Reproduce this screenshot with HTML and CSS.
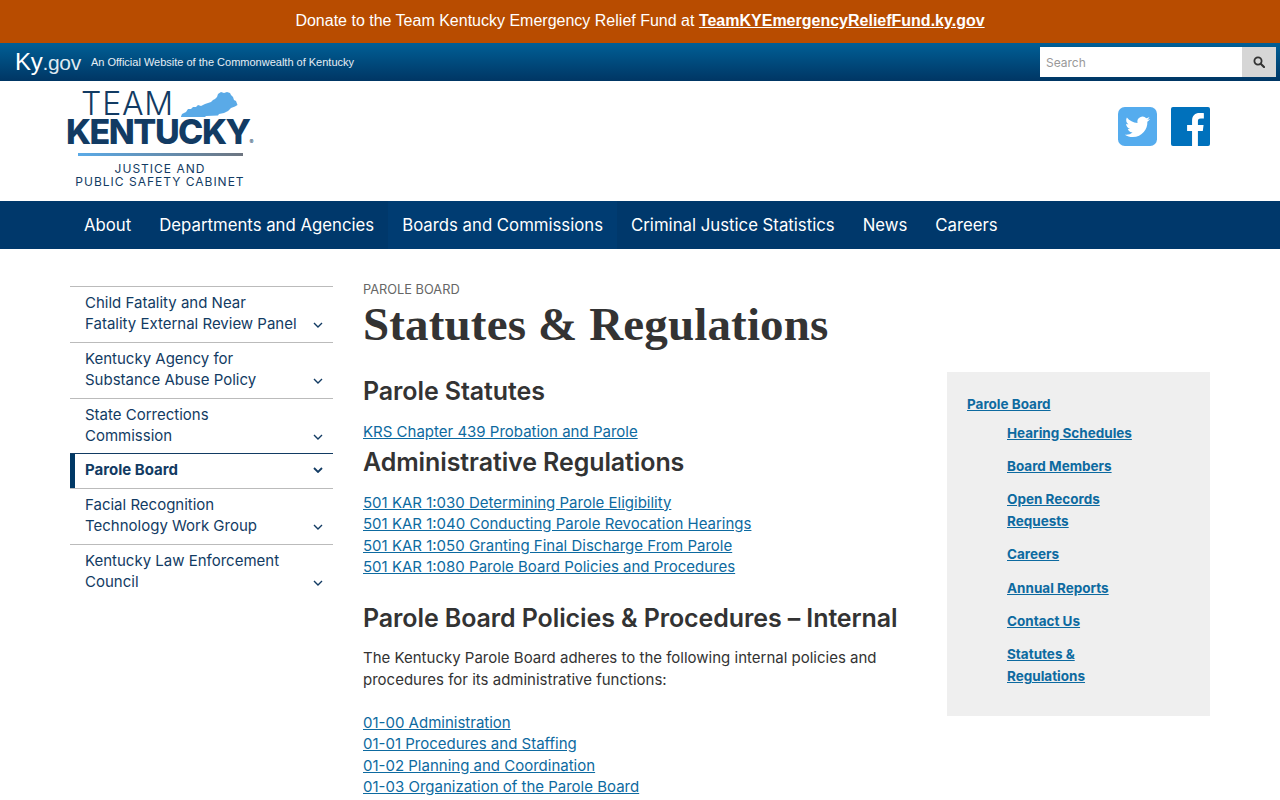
FILE: index.html
```html
<!DOCTYPE html>
<html lang="en">
<head>
    <meta charset="UTF-8">
    <title>Statutes &amp; Regulations</title>
    <link rel="stylesheet" href="styles.css">
</head>
<body>
    <div class="alert">Donate to the Team Kentucky Emergency Relief Fund at <a href="#">TeamKYEmergencyReliefFund.ky.gov</a></div>

    <div class="gov-bar">
        <a class="gov-logo" href="#">Ky<span>.gov</span></a>
        <span class="gov-note">An Official Website of the Commonwealth of Kentucky</span>
        <form class="search">
            <input type="text" placeholder="Search">
            <button type="button" aria-label="Search">
                <svg width="12" height="12" viewBox="0 0 12 12"><circle cx="5" cy="5" r="3.6" fill="none" stroke="#333" stroke-width="1.8"/><path d="M7.7 7.7 11 11" stroke="#333" stroke-width="2.1" stroke-linecap="round"/></svg>
            </button>
        </form>
    </div>

    <header class="site-header">
        <a class="logo" href="#">
            <div class="logo-top">
                <span class="logo-team">TEAM</span>
                <svg class="logo-state" width="57" height="25" viewBox="0 0 57 25"><path d="M0 24.500 1 22l4-2 2-3h3l2-2h3l2-2 3 1 4-2 3-1 3-1 2-2 2-1 2-2 1-3 3-2 3 1 3-1 3 1 1 2 2 2 1 3 2 1 1.500 4-2.500 1.500-4 1.500-3 3-4 2-5 1-1 1.500-12 .5-1 1H0z" fill="#5aaae7"/></svg>
            </div>
            <div class="logo-name">KENTUCKY<sup>®</sup></div>
            <div class="logo-rule"></div>
            <div class="logo-cabinet">JUSTICE AND<br>PUBLIC SAFETY CABINET</div>
        </a>
        <div class="social">
            <a href="#" aria-label="Twitter">
                <svg width="39" height="39" viewBox="0 0 40 40"><rect width="40" height="40" rx="7" fill="#55acee"/><path d="M33 12.300c-1 .4-2 .7-3 .8 1.100-.7 1.900-1.700 2.300-2.900-1 .6-2.200 1-3.300 1.300a5.300 5.300 0 0 0-9 4.800c-4.400-.2-8.300-2.300-10.900-5.500-1.400 2.400-.7 5.500 1.600 7-.8 0-1.600-.2-2.400-.6 0 2.500 1.800 4.700 4.200 5.200-.8.200-1.600.2-2.400.1.700 2.100 2.600 3.600 4.900 3.700A10.600 10.600 0 0 1 7 28.400c2.400 1.500 5.200 2.400 8.100 2.400 9.800 0 15.400-8.300 15-15.700 1.100-.7 2.100-1.700 2.900-2.800z" fill="#fff"/></svg>
            </a>
            <a href="#" aria-label="Facebook">
                <svg width="39" height="39" viewBox="0 0 40 40"><rect width="40" height="40" rx="2" fill="#0071bc"/><path d="M27.600 40V24.500h5l.8-6h-5.800v-3.800c0-1.700.5-2.900 3-2.900h3.100V6.400c-.5-.1-2.400-.2-4.500-.2-4.500 0-7.600 2.700-7.600 7.800v4.500h-5.100v6h5.100V40z" fill="#fff"/></svg>
            </a>
        </div>
    </header>

    <nav class="main-nav">
        <a href="#">About</a>
        <a href="#">Departments and Agencies</a>
        <a class="current" href="#">Boards and Commissions</a>
        <a href="#">Criminal Justice Statistics</a>
        <a href="#">News</a>
        <a href="#">Careers</a>
    </nav>

    <main class="page">
        <aside class="side-nav">
            <a class="side-item" href="#"><span>Child Fatality and Near<br>Fatality External Review Panel</span><svg class="chev" width="10" height="6" viewBox="0 0 10 6"><path d="M1 1l4 4 4-4"/></svg></a>
            <a class="side-item" href="#"><span>Kentucky Agency for<br>Substance Abuse Policy</span><svg class="chev" width="10" height="6" viewBox="0 0 10 6"><path d="M1 1l4 4 4-4"/></svg></a>
            <a class="side-item" href="#"><span>State Corrections<br>Commission</span><svg class="chev" width="10" height="6" viewBox="0 0 10 6"><path d="M1 1l4 4 4-4"/></svg></a>
            <a class="side-item active" href="#"><span>Parole Board</span><svg class="chev" width="10" height="6" viewBox="0 0 10 6"><path d="M1 1l4 4 4-4"/></svg></a>
            <a class="side-item" href="#"><span>Facial Recognition<br>Technology Work Group</span><svg class="chev" width="10" height="6" viewBox="0 0 10 6"><path d="M1 1l4 4 4-4"/></svg></a>
            <a class="side-item" href="#"><span>Kentucky Law Enforcement<br>Council</span><svg class="chev" width="10" height="6" viewBox="0 0 10 6"><path d="M1 1l4 4 4-4"/></svg></a>
        </aside>

        <div class="content">
            <div class="eyebrow">PAROLE BOARD</div>
            <h1>Statutes &amp; Regulations</h1>
            <div class="columns">
                <article class="article">
                    <h2>Parole Statutes</h2>
                    <p class="links first"><a href="#">KRS Chapter 439 Probation and Parole</a></p>
                    <h2 class="tight">Administrative Regulations</h2>
                    <p class="links">
                        <a href="#">501 KAR 1:030 Determining Parole Eligibility</a><br>
                        <a href="#">501 KAR 1:040 Conducting Parole Revocation Hearings</a><br>
                        <a href="#">501 KAR 1:050 Granting Final Discharge From Parole</a><br>
                        <a href="#">501 KAR 1:080 Parole Board Policies and Procedures</a>
                    </p>
                    <h2 class="spaced">Parole Board Policies &amp; Procedures – Internal</h2>
                    <p class="intro">The Kentucky Parole Board adheres to the following internal policies and procedures for its administrative functions:</p>
                    <p class="links">
                        <a href="#">01-00 Administration</a><br>
                        <a href="#">01-01 Procedures and Staffing</a><br>
                        <a href="#">01-02 Planning and Coordination</a><br>
                        <a href="#">01-03 Organization of the Parole Board</a>
                    </p>
                </article>

                <aside class="related">
                    <a class="related-top" href="#">Parole Board</a>
                    <ul>
                        <li><a href="#">Hearing Schedules</a></li>
                        <li><a href="#">Board Members</a></li>
                        <li><a href="#">Open Records<br>Requests</a></li>
                        <li><a href="#">Careers</a></li>
                        <li><a href="#">Annual Reports</a></li>
                        <li><a href="#">Contact Us</a></li>
                        <li><a href="#">Statutes &amp;<br>Regulations</a></li>
                    </ul>
                </aside>
            </div>
        </div>
    </main>
</body>
</html>
```

FILE: styles.css
```css
* {
    margin: 0;
    padding: 0;
    box-sizing: border-box;
}
html, body {
    height: 800px;
    overflow: hidden;
}
body {
    font-family: Inter, "Noto Sans", sans-serif;
    color: #333;
    background: #fff;
}
a {
    color: inherit;
    text-decoration: none;
}

/* top banner */
.alert {
    height: 43px;
    background: #b84c00;
    color: #fff;
    font-family: "Liberation Sans", Arial, sans-serif;
    font-size: 16px;
    line-height: 41px;
    text-align: center;
}
.alert a {
    font-weight: bold;
    text-decoration: underline;
}

/* ky.gov bar */
.gov-bar {
    height: 38px;
    background: linear-gradient(#005f96, #003664);
    color: #fff;
    font-family: "Liberation Sans", Arial, sans-serif;
    display: flex;
    align-items: center;
    padding: 0 4px 0 15px;
}
.gov-logo {
    font-size: 24px;
    letter-spacing: -0.3px;
}
.gov-logo span {
    font-size: 21px;
    color: #dfe9f1;
}
.gov-note {
    font-size: 11px;
    margin-left: 10px;
    color: #e6eef5;
}
.search {
    margin-left: auto;
    display: flex;
    width: 236px;
    height: 30px;
}
.search input {
    flex: 1;
    min-width: 0;
    border: 0;
    padding: 0 6px;
    font-family: Inter, sans-serif;
    font-size: 12px;
    background: #fff;
}
.search input::placeholder {
    color: #999;
}
.search button {
    width: 34px;
    border: 0;
    background: #d6d6d6;
    display: flex;
    align-items: center;
    justify-content: center;
}

/* logo + social */
.site-header {
    height: 120px;
    padding: 0 70px 0 67px;
    display: flex;
    justify-content: space-between;
}
.logo {
    display: block;
    width: 188px;
    padding-top: 9px;
    color: #123b63;
    font-family: Inter, sans-serif;
}
.logo-top {
    display: flex;
    align-items: flex-end;
    height: 28px;
    padding-left: 14px;
}
.logo-team {
    font-size: 32px;
    line-height: 28px;
    font-weight: 300;
    letter-spacing: 0.800px;
}
.logo-state {
    margin-left: 7px;
    margin-bottom: 1px;
}
.logo-name {
    font-size: 34px;
    line-height: 26px;
    font-weight: 800;
    letter-spacing: -1.500px;
    white-space: nowrap;
    margin: 1px 0 0 -1px;
}
.logo-name sup {
    font-size: 6px;
    line-height: 0;
    font-weight: 400;
    letter-spacing: 0;
    vertical-align: baseline;
}
.logo-rule {
    width: 165px;
    height: 3px;
    margin: 8px 0 0 11px;
    background: linear-gradient(90deg, #5aaae7, #6d7580);
}
.logo-cabinet {
    font-size: 12px;
    line-height: 13px;
    letter-spacing: 1px;
    text-align: center;
    margin-top: 6px;
    width: 186px;
    white-space: nowrap;
}
.social {
    display: flex;
    gap: 14px;
    padding-top: 26px;
}
.social a {
    height: 39px;
}

/* main nav */
.main-nav {
    height: 48px;
    background: #00386b;
    padding-left: 70px;
    display: flex;
}
.main-nav a {
    color: #fff;
    font-size: 16.750px;
    line-height: 48px;
    padding: 0 14px;
}
.main-nav a.current {
    background: #003c72;
}

/* page */
.page {
    display: flex;
    padding: 33px 70px 0;
}
.side-nav {
    width: 263px;
    flex: none;
    margin-right: 30px;
    padding-top: 4px;
    color: #123b63;
    font-size: 15px;
    line-height: 21px;
}
.side-item {
    display: flex;
    justify-content: space-between;
    align-items: flex-end;
    border-top: 1px solid #bbb;
    padding: 5px 10px 8px 15px;
    height: 56px;
}
.side-item span {
    display: block;
}
.side-item .chev {
    margin-bottom: 6px;
    flex: none;
}
.chev path {
    fill: none;
    stroke: #123b63;
    stroke-width: 1.400;
}
.side-item.active {
    height: 35px;
    margin-top: -1px;
    font-weight: 700;
    border-top-color: #123b63;
    box-shadow: inset 5px 0 0 #003865;
    padding-top: 5px;
    padding-bottom: 8px;
    align-items: center;
}
.side-item.active .chev {
    margin-bottom: 0;
}
.side-item.active .chev path {
    stroke-width: 1.800;
}

.content {
    flex: 1;
    min-width: 0;
}
.eyebrow {
    font-size: 12.800px;
    line-height: 16px;
    color: #666;
}
h1 {
    font-family: "Liberation Serif", serif;
    font-size: 47px;
    line-height: 52px;
    font-weight: 700;
    letter-spacing: 0.150px;
    color: #333;
}
.columns {
    display: flex;
    justify-content: space-between;
    align-items: flex-start;
    margin-top: 25px;
}
.article {
    width: 550px;
}
h2 {
    font-size: 25px;
    line-height: 32px;
    font-weight: 600;
    color: #333;
    letter-spacing: -0.1px;
    white-space: nowrap;
}
h2.tight {
    margin-top: 3px;
}
h2.spaced {
    margin-top: 24px;
}
.links {
    font-size: 15px;
    line-height: 21.500px;
    margin-top: 14px;
}
.links a {
    color: #0d6aa0;
    text-decoration: underline;
}
.intro {
    font-size: 15px;
    line-height: 22px;
    margin-top: 13px;
    margin-bottom: -2px;
    color: #333;
}
.intro + .links {
    margin-top: 23px;
}

.related {
    width: 263px;
    height: 344px;
    background: #efefef;
    padding: 22px 20px;
    margin-top: -3px;
    font-size: 13.500px;
    line-height: 21.500px;
    font-weight: 700;
    color: #0d6aa0;
}
.related a {
    text-decoration: underline;
}
.related-top {
    display: block;
}
.related ul {
    list-style: none;
    padding-left: 40px;
    margin-top: 7px;
}
.related li {
    margin-bottom: 11.900px;
}
```
